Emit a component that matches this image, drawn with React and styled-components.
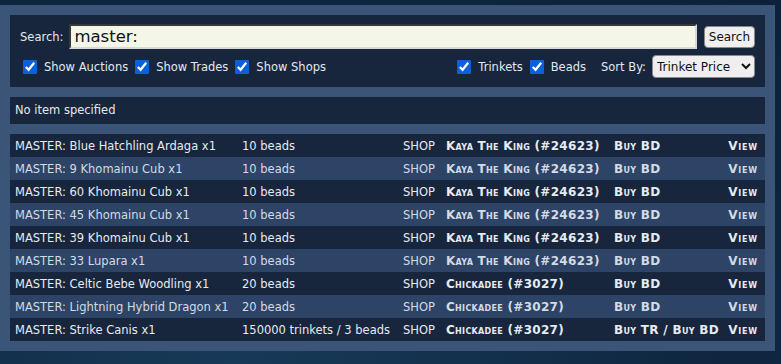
import React from "react";
import styled, { createGlobalStyle } from "styled-components";

const GlobalStyle = createGlobalStyle`
  html, body {
    margin: 0;
    padding: 0;
    background: radial-gradient(ellipse at 30% 100%, #173a58 0%, #0f2741 60%, #0c2139 100%);
    min-height: 364px;
    font-family: "DejaVu Sans", Verdana, sans-serif;
    color: #e3e8ee;
  }
`;

const Outer = styled.div`
  width: 755px;
  margin-top: 5px;
  padding: 10px;
  background: #3b5578;
  display: flex;
  flex-direction: column;
  gap: 10px;
`;

const Panel = styled.div`
  background: #17263d;
  padding: ${(p) => p.$pad || "0"};
  font-size: 11.5px;
`;

const SearchRow = styled.div`
  display: flex;
  align-items: center;
  gap: 6px;
`;

const Label = styled.span`
  font-size: 11.5px;
  color: #e3e8ee;
  white-space: nowrap;
  margin-left: 1px;
`;

const SearchInput = styled.input`
  flex: 1;
  height: 25px;
  box-sizing: border-box;
  background: #f4f6e7;
  border: 2px inset #8c8c8c;
  border-right-color: #d8d8d8;
  border-bottom-color: #d8d8d8;
  font-family: "DejaVu Sans", Verdana, sans-serif;
  font-size: 16.5px;
  padding: 0 3px;
  color: #111;
  outline: none;
`;

const Button = styled.button`
  height: 22px;
  padding: 0 4px;
  border: 1px solid #8a8a8a;
  border-radius: 4px;
  background: #efefef;
  font-family: "DejaVu Sans", Verdana, sans-serif;
  font-size: 12px;
  color: #111;
  margin-left: 1px;
`;

const OptionsRow = styled.div`
  display: flex;
  align-items: center;
  margin-top: 6px;
  padding-left: 4px;
`;

const Check = styled.label`
  display: flex;
  align-items: center;
  gap: 7px;
  margin-right: 7px;
  white-space: nowrap;
  input {
    margin: 0;
    width: 14px;
    height: 14px;
    accent-color: #0b5fdb;
  }
`;

const Spacer = styled.div`
  flex: 1;
`;

const SortLabel = styled.span`
  margin-left: 8px;
  margin-right: 6px;
`;

const Select = styled.select`
  height: 23px;
  width: 103px;
  border: 1px solid #8a8a8a;
  border-radius: 4px;
  background: #efefef;
  font-family: "DejaVu Sans", Verdana, sans-serif;
  font-size: 12px;
  color: #111;
`;

const Message = styled.div`
  padding: 7px 5px;
  height: 13px;
  line-height: 13px;
`;

const Table = styled.div`
  display: flex;
  flex-direction: column;
`;

const Row = styled.div`
  display: grid;
  grid-template-columns: 227px 161px 43px 168px 1fr auto;
  align-items: center;
  height: 23px;
  padding: 0 7px 0 5px;
  font-size: 11.5px;
  background: ${(p) => (p.$alt ? "#2e4466" : "#17263d")};
  color: ${(p) => (p.$alt ? "#d3dbe5" : "#e6ebf1")};
  white-space: nowrap;
`;

const Strong = styled.span`
  font-weight: bold;
  font-variant: small-caps;
  font-size: 12px;
  letter-spacing: 0.3px;
`;

const ViewLink = styled(Strong)`
  text-align: right;
  letter-spacing: 0.8px;
`;

const rows = [
  ["MASTER: Blue Hatchling Ardaga x1", "10 beads", "Kaya The King (#24623)", "Buy BD"],
  ["MASTER: 9 Khomainu Cub x1", "10 beads", "Kaya The King (#24623)", "Buy BD"],
  ["MASTER: 60 Khomainu Cub x1", "10 beads", "Kaya The King (#24623)", "Buy BD"],
  ["MASTER: 45 Khomainu Cub x1", "10 beads", "Kaya The King (#24623)", "Buy BD"],
  ["MASTER: 39 Khomainu Cub x1", "10 beads", "Kaya The King (#24623)", "Buy BD"],
  ["MASTER: 33 Lupara x1", "10 beads", "Kaya The King (#24623)", "Buy BD"],
  ["MASTER: Celtic Bebe Woodling x1", "20 beads", "Chickadee (#3027)", "Buy BD"],
  ["MASTER: Lightning Hybrid Dragon x1", "20 beads", "Chickadee (#3027)", "Buy BD"],
  ["MASTER: Strike Canis x1", "150000 trinkets / 3 beads", "Chickadee (#3027)", "Buy TR / Buy BD"],
];

export default function App() {
  return (
    <>
      <GlobalStyle />
      <Outer>
        <Panel $pad="9px 10px 9px 9px">
          <SearchRow>
            <Label>Search:</Label>
            <SearchInput defaultValue="master:" />
            <Button>Search</Button>
          </SearchRow>
          <OptionsRow>
            <Check><input type="checkbox" defaultChecked />Show Auctions</Check>
            <Check><input type="checkbox" defaultChecked />Show Trades</Check>
            <Check><input type="checkbox" defaultChecked />Show Shops</Check>
            <Spacer />
            <Check><input type="checkbox" defaultChecked />Trinkets</Check>
            <Check><input type="checkbox" defaultChecked />Beads</Check>
            <SortLabel>Sort By:</SortLabel>
            <Select defaultValue="trinket">
              <option value="trinket">Trinket Price</option>
              <option value="bead">Bead Price</option>
            </Select>
          </OptionsRow>
        </Panel>
        <Panel>
          <Message>No item specified</Message>
        </Panel>
        <Table>
          {rows.map((r, i) => (
            <Row key={i} $alt={i % 2 === 1}>
              <span>{r[0]}</span>
              <span>{r[1]}</span>
              <span>SHOP</span>
              <Strong>{r[2]}</Strong>
              <Strong>{r[3]}</Strong>
              <ViewLink>View</ViewLink>
            </Row>
          ))}
        </Table>
      </Outer>
    </>
  );
}
